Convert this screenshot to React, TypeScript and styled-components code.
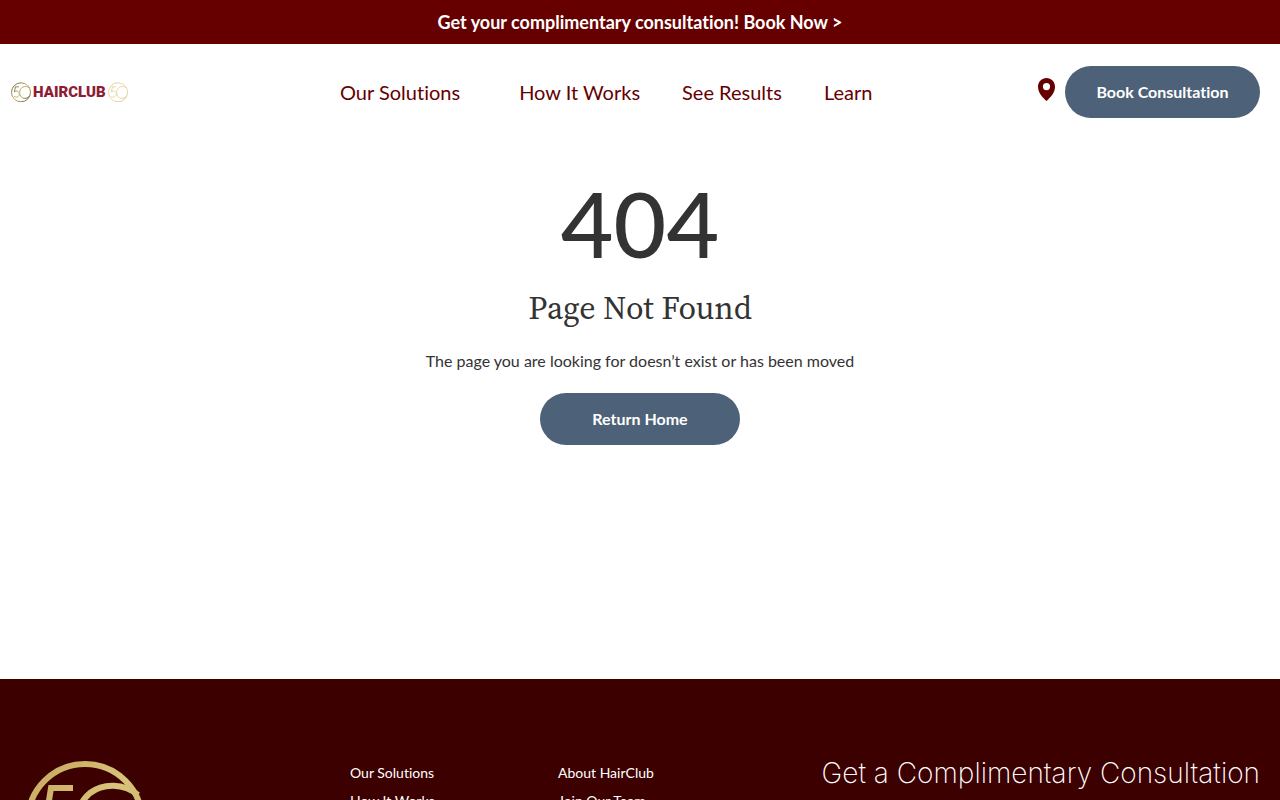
import React from "react";
import styled, { createGlobalStyle } from "styled-components";

const GlobalStyle = createGlobalStyle`
  *, *::before, *::after { box-sizing: border-box; }
  html { scrollbar-width: none; }
  body {
    margin: 0;
    background: #ffffff;
    color: #333333;
    font-family: Lato, "Liberation Sans", sans-serif;
    font-size: 16px;
    line-height: 24px;
    font-variant-ligatures: none;
  }
`;

const Banner = styled.a`
  display: block;
  padding: 10px 20px;
  background: #660000;
  color: #ffffff;
  font-size: 18px;
  font-weight: 700;
  line-height: 24px;
  text-align: center;
  text-decoration: none;
`;

const Header = styled.header`
  display: grid;
  grid-template-columns: 340px 1fr auto;
  align-items: center;
  padding: 22px 20px 22px 0;
`;

const Brand = styled.a`
  display: flex;
  align-items: center;
  gap: 2px;
  padding: 0 0 1px 11px;
  color: #8e1c35;
  text-decoration: none;
`;

const BrandName = styled.span`
  font-family: Roboto, "Liberation Sans", sans-serif;
  font-size: 15px;
  font-weight: 900;
  line-height: 20px;
`;

const Emblem = styled.svg<{ $size: number }>`
  display: block;
  flex: none;
  width: ${(p) => p.$size}px;
  height: ${(p) => p.$size}px;
`;

const Nav = styled.nav`
  display: flex;
  gap: 42px;
`;

const NavLink = styled.a<{ $menu?: boolean }>`
  padding-right: ${(p) => (p.$menu ? 17 : 0)}px;
  color: #660000;
  font-size: 20px;
  line-height: 28px;
  text-decoration: none;
  white-space: nowrap;
`;

const Actions = styled.div`
  display: flex;
  align-items: center;
  gap: 10px;
`;

const PinLink = styled.a`
  display: block;
  padding-bottom: 5px;
  svg { display: block; }
`;

const PillButton = styled.button<{ $width: number }>`
  width: ${(p) => p.$width}px;
  height: 52px;
  border: 0;
  border-radius: 26px;
  background: #4d6278;
  color: #ffffff;
  font: 700 16px/24px Lato, "Liberation Sans", sans-serif;
  font-variant-ligatures: none;
  cursor: pointer;
`;

const Main = styled.main`
  display: flex;
  flex-direction: column;
  align-items: center;
  min-height: 539px;
  padding: 28px 20px;
  text-align: center;
`;

const Code = styled.h1`
  margin: 0;
  font-size: 91px;
  font-weight: 500;
  line-height: 110px;
`;

const Title = styled.h2`
  margin: 10px 0 21px;
  font-family: "Source Serif 4", "Source Serif Pro", "Liberation Serif", serif;
  font-size: 32px;
  font-weight: 400;
  line-height: 40px;
`;

const Message = styled.p`
  margin: 0 0 20px;
  line-height: 24px;
`;

const Footer = styled.footer`
  display: grid;
  grid-template-columns: 325px 1fr auto;
  padding: 80px 20px 60px 25px;
  background: #3d0000;
  color: #ffffff;
`;

const FooterNav = styled.nav`
  display: flex;
`;

const LinkList = styled.ul`
  width: 208px;
  margin: 0;
  padding: 0;
  list-style: none;
`;

const FooterLink = styled.a`
  color: #ffffff;
  font-size: 14px;
  line-height: 28px;
  text-decoration: none;
`;

const FooterTitle = styled.h2`
  margin: 0;
  font-family: Inter, "Liberation Sans", sans-serif;
  font-size: 28px;
  font-weight: 200;
  line-height: 28px;
`;

function FiftyEmblem({ size, tone, id }: { size: number; tone: [string, string]; id: string }) {
  return (
    <Emblem $size={size} viewBox="0 0 120 120" fill="none" aria-hidden="true">
      <defs>
        <linearGradient id={id} x1="0" y1="0" x2="120" y2="120" gradientUnits="userSpaceOnUse">
          <stop offset="0" stopColor={tone[0]} />
          <stop offset="0.5" stopColor={tone[1]} />
          <stop offset="1" stopColor={tone[0]} />
        </linearGradient>
      </defs>
      <g stroke={`url(#${id})`} strokeWidth="6">
        <circle cx="60" cy="62" r="57" />
        <path d="M48 29H26L21 60C32 49 50 55 50 72C50 90 30 96 18 85" />
        <path d="M113 36C99 24 78 24 65 34C48 48 48 78 64 91C80 104 103 98 110 82" />
      </g>
    </Emblem>
  );
}

const solutionLinks = ["Our Solutions", "How It Works", "See Results", "Learn"];
const companyLinks = ["About HairClub", "Join Our Team", "Contact Us"];

function FooterLinks({ items }: { items: string[] }) {
  return (
    <LinkList>
      {items.map((item) => (
        <li key={item}>
          <FooterLink href="#">{item}</FooterLink>
        </li>
      ))}
    </LinkList>
  );
}

export default function App() {
  return (
    <>
      <GlobalStyle />
      <Banner href="#">Get your complimentary consultation! Book Now &gt;</Banner>
      <Header>
        <Brand href="#" aria-label="HairClub">
          <FiftyEmblem size={20} tone={["#5c522f", "#c9b26a"]} id="brandDark" />
          <BrandName>HAIRCLUB</BrandName>
          <FiftyEmblem size={20} tone={["#e3cd8d", "#e9d9a8"]} id="brandLight" />
        </Brand>
        <Nav>
          <NavLink href="#" $menu>Our Solutions</NavLink>
          <NavLink href="#">How It Works</NavLink>
          <NavLink href="#">See Results</NavLink>
          <NavLink href="#">Learn</NavLink>
        </Nav>
        <Actions>
          <PinLink href="#" aria-label="Find a location">
            <svg width="17" height="23" viewBox="0 0 17 23">
              <path
                fill="#660000"
                fillRule="evenodd"
                d="M8.500 0C3.800 0 0 3.800 0 8.800C0 14.500 4 19 8.500 23C13 19 17 14.500 17 8.800C17 3.800 13.200 0 8.500 0ZM8.500 5A3.600 3.600 0 1 1 8.500 12.200A3.600 3.600 0 1 1 8.500 5Z"
              />
            </svg>
          </PinLink>
          <PillButton $width={195}>Book Consultation</PillButton>
        </Actions>
      </Header>
      <Main>
        <Code>404</Code>
        <Title>Page Not Found</Title>
        <Message>The page you are looking for doesn’t exist or has been moved</Message>
        <PillButton $width={200}>Return Home</PillButton>
      </Main>
      <Footer>
        <FiftyEmblem size={120} tone={["#c3a559", "#d9c37a"]} id="footerGold" />
        <FooterNav>
          <FooterLinks items={solutionLinks} />
          <FooterLinks items={companyLinks} />
        </FooterNav>
        <FooterTitle>Get a Complimentary Consultation</FooterTitle>
      </Footer>
    </>
  );
}
